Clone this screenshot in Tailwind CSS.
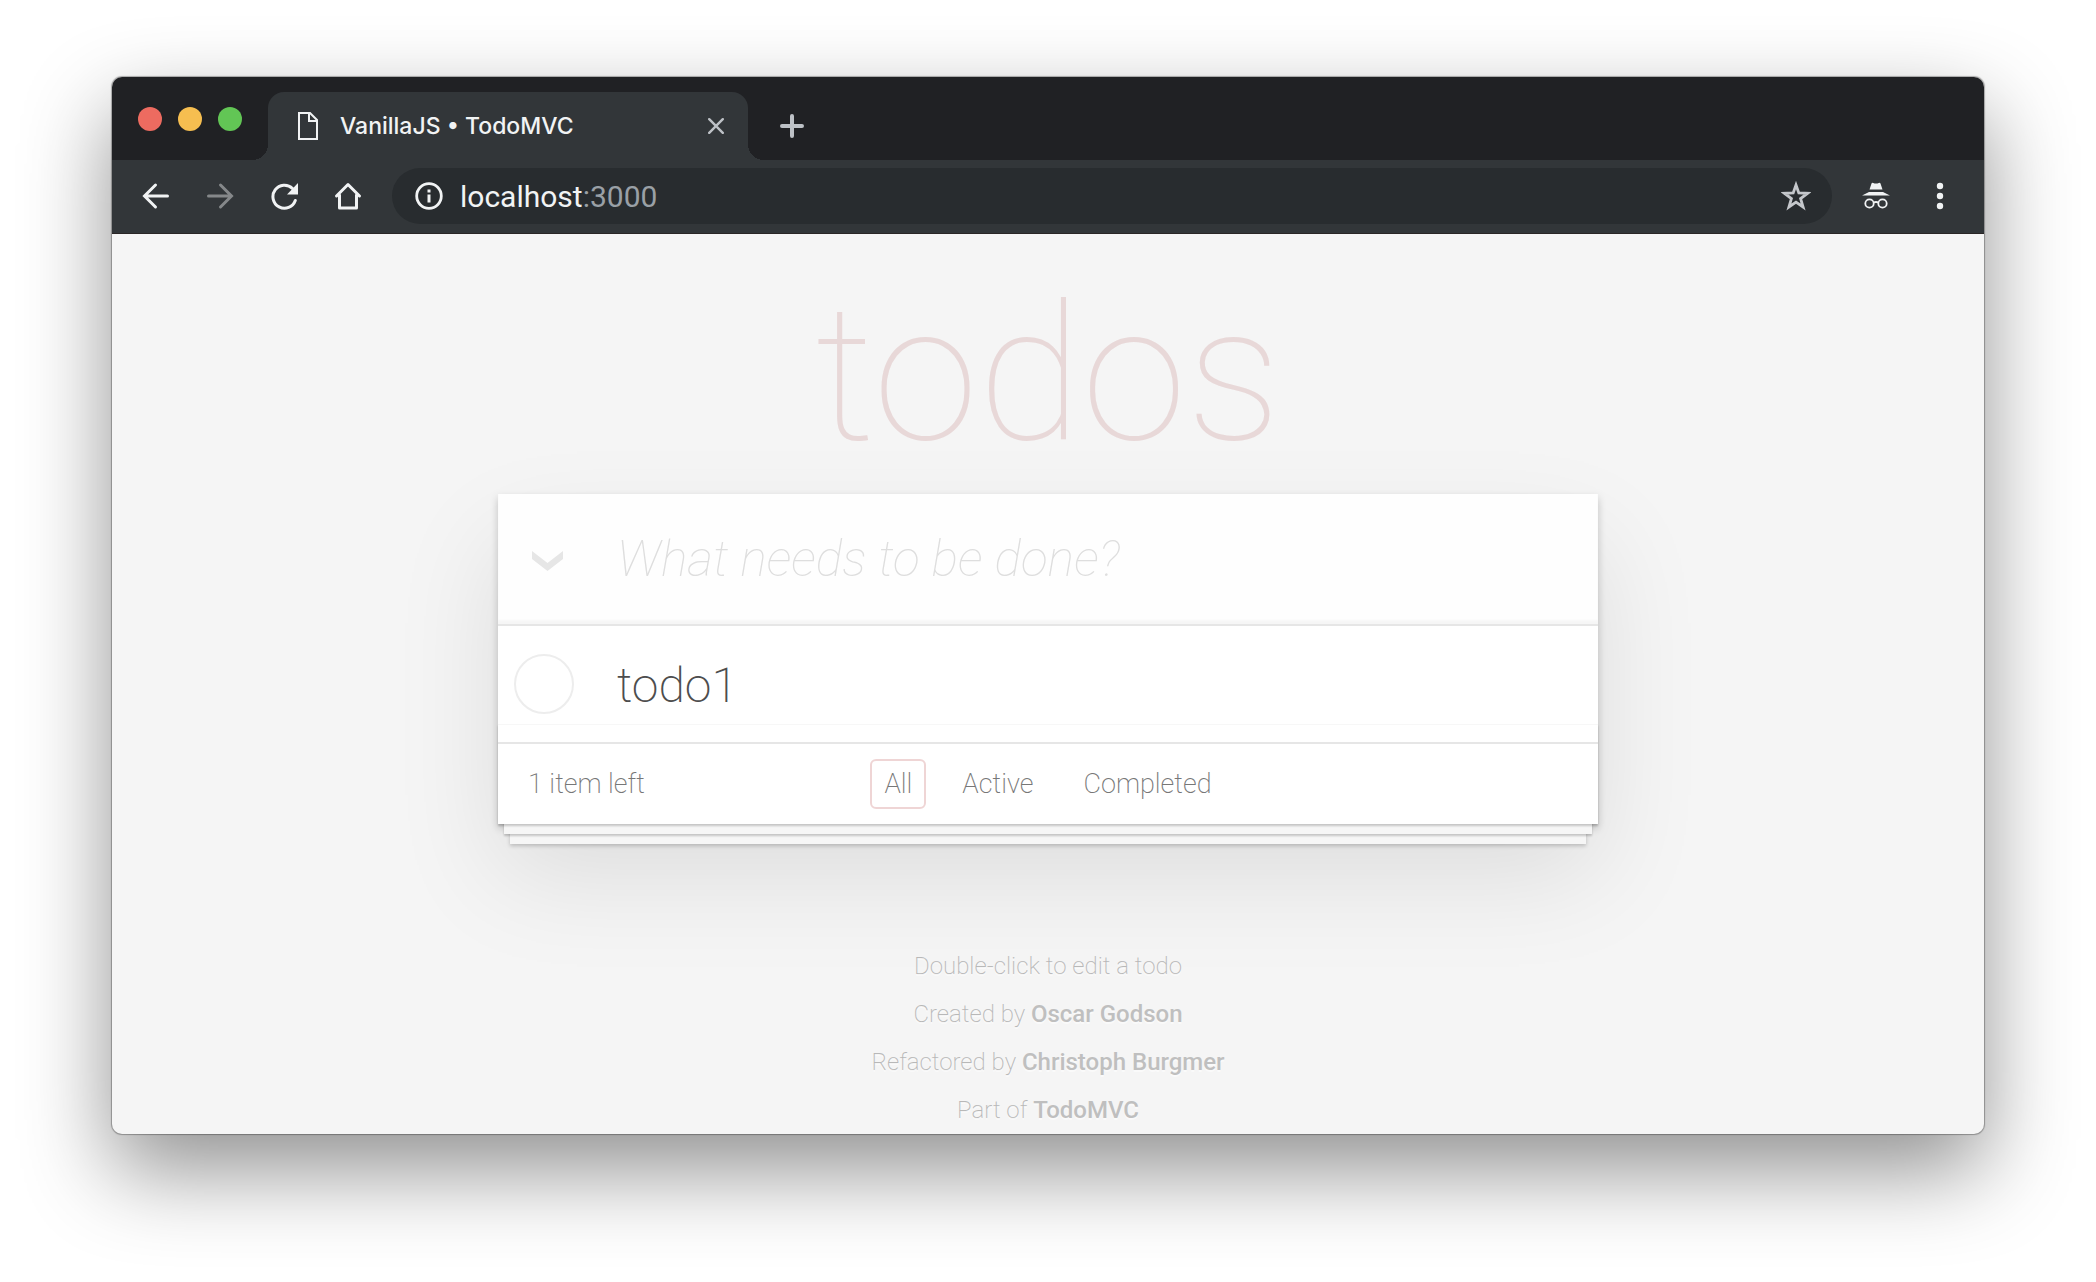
<!DOCTYPE html>
<html lang="en">
<head>
<meta charset="utf-8">
<title>VanillaJS • TodoMVC</title>
<script src="https://cdn.jsdelivr.net/npm/@tailwindcss/browser@4"></script>
</head>
<body class="bg-white font-['Roboto',sans-serif]">
<div class="mx-28 mt-[77px] mb-[148px] overflow-clip rounded-[10px] bg-[#f5f5f5] shadow-[0_0_1px_1px_rgba(0,0,0,0.3),0_36px_88px_rgba(0,0,0,0.44)]">

  <!-- Tab strip -->
  <header class="flex h-[83px] items-end bg-[#202124]">
    <div class="flex h-full w-39 items-center gap-4 pl-[26px]">
      <button aria-label="Close window" class="size-6 rounded-full bg-[#ed6b60]"></button>
      <button aria-label="Minimize window" class="size-6 rounded-full bg-[#f6be50]"></button>
      <button aria-label="Zoom window" class="size-6 rounded-full bg-[#62c655]"></button>
    </div>
    <div class="relative flex h-17 w-[480px] items-center rounded-t-2xl bg-[#323639] pr-[22px] pl-[30px]">
      <span class="absolute bottom-0 -left-4 size-4 bg-[radial-gradient(circle_at_0_0,#202124_16px,#323639_16px)]"></span>
      <span class="absolute -right-4 bottom-0 size-4 bg-[radial-gradient(circle_at_100%_0,#202124_16px,#323639_16px)]"></span>
      <svg class="h-7 w-5" viewBox="0 0 20 28" fill="none" stroke="#f1f3f4" stroke-width="2"><path d="M1 1h11l7 7v19H1zM11 1v8h8"/></svg>
      <span class="ml-[22px] flex-1 font-['Inter',sans-serif] text-[23px] font-medium whitespace-nowrap text-[#f1f3f4]">VanillaJS • TodoMVC</span>
      <button aria-label="Close tab" class="p-0.5"><svg class="size-4" viewBox="0 0 16 16" stroke="#bdc1c6" stroke-width="2.4" stroke-linecap="round"><path d="M1.2 1.2l13.6 13.6M14.8 1.2L1.2 14.8"/></svg></button>
    </div>
    <button aria-label="New tab" class="mb-[22px] ml-8"><svg class="size-6" viewBox="0 0 24 24" stroke="#bdc1c6" stroke-width="4" stroke-linecap="round"><path d="M12 2v20M2 12h20"/></svg></button>
  </header>

  <!-- Toolbar -->
  <nav class="flex h-[74px] items-center border-b border-[#2a2626] bg-[#323639] pr-8 pb-px pl-[30px]">
    <button aria-label="Back" class="mr-9"><svg class="size-7" viewBox="0 0 28 28" fill="none" stroke="#f1f3f4" stroke-width="3" stroke-linecap="round"><path d="M25.500 14H3M13.500 3L2.500 14l11 11"/></svg></button>
    <button aria-label="Forward" class="mr-9"><svg class="size-7" viewBox="0 0 28 28" fill="none" stroke="#85888a" stroke-width="3" stroke-linecap="round"><path d="M2.500 14H25M14.500 3l11 11-11 11"/></svg></button>
    <button aria-label="Reload" class="mr-9"><svg class="size-7" viewBox="0 0 28 28"><path d="M25.300 18.500A11.500 11.500 0 1 1 22.500 6.500" fill="none" stroke="#f1f3f4" stroke-width="3" stroke-linecap="round"/><path d="M28 1v11.500H17z" fill="#f1f3f4"/></svg></button>
    <button aria-label="Home" class="mr-[30px]"><svg class="size-7" viewBox="0 0 28 28" fill="none" stroke="#f1f3f4" stroke-width="3" stroke-linecap="round" stroke-linejoin="round"><path d="M2.500 14L14 2.500 25.500 14M5.500 13v13h17V13"/></svg></button>
    <div class="flex h-14 flex-1 items-center rounded-full bg-[#282c2f] pr-[21px] pl-[23px]">
      <svg class="size-7" viewBox="0 0 28 28"><circle cx="14" cy="14" r="12.300" fill="none" stroke="#f1f3f4" stroke-width="2.800"/><path d="M12.500 7.500h3v3h-3zM12.500 12.500h3v8h-3z" fill="#f1f3f4"/></svg>
      <div class="ml-[17px] flex-1 text-[30px] text-[#9aa0a6]"><span class="text-[#f1f3f4]">localhost</span>:3000</div>
      <button aria-label="Bookmark this page"><svg class="size-[30px]" viewBox="0 0 30 30" fill="none" stroke="#c4c7cb" stroke-width="2.800"><path d="M15 4l2.800 8 8.700.3-6.900 5.300 2.500 8.400-7.100-4.900L7.900 26l2.500-8.400L3.500 12.300l8.700-.3z"/></svg></button>
    </div>
    <svg class="ml-[30px] h-7 w-7" viewBox="0 0 28 28" fill="#f1f3f4" role="img" aria-label="Incognito"><path d="M9.500 1.500q.5-1 1.700-.6 2.800 1 5.600 0 1.200-.4 1.700.6L20.500 7.500h-13zM7 10h14l7 3.500H0z"/><g fill="none" stroke="#f1f3f4" stroke-width="1.800"><circle cx="7.500" cy="21.500" r="4.200"/><circle cx="20.500" cy="21.500" r="4.200"/><path d="M11.500 20.500q2.500-1 5 0"/></g></svg>
    <button aria-label="Menu" class="ml-[38px]"><svg class="h-7 w-6" viewBox="0 0 24 28" fill="#f1f3f4"><circle cx="12" cy="4" r="3.200"/><circle cx="12" cy="14" r="3.200"/><circle cx="12" cy="24" r="3.200"/></svg></button>
  </nav>

  <!-- Page -->
  <main class="px-8">
    <h1 class="h-65 pt-7 text-center text-[190px] leading-[225px] font-thin text-[#e8d8d8]">todos</h1>
    <section class="mx-auto max-w-[1100px] bg-white shadow-[0_4px_8px_rgba(0,0,0,0.2),0_50px_100px_rgba(0,0,0,0.1)]">
      <div class="flex h-[130px] items-center bg-[#fefefe] pl-[34px] shadow-[inset_0_-4px_2px_rgba(0,0,0,0.03)]">
        <button aria-label="Mark all as complete" class="mt-1"><svg class="h-5 w-[31px]" viewBox="0 0 31 20" fill="#e6e6e6"><path d="M0 0l15.500 12L31 0v8L15.500 20 0 8z"/></svg></button>
        <input aria-label="New todo" placeholder="What needs to be done?" class="ml-[54px] h-full min-w-0 flex-1 bg-transparent text-[50px] font-thin italic outline-none placeholder:text-[#dedede]">
      </div>
      <ul class="border-t-2 border-[#e6e6e6]">
        <li class="flex h-29 items-center pl-4">
          <input type="checkbox" id="todo1" class="size-15 appearance-none rounded-full border-2 border-[#ededed]">
          <label for="todo1" class="ml-[43px] pt-1 text-5xl font-extralight text-[#4d4d4d]">todo1</label>
        </li>
      </ul>
      <footer class="relative grid h-[82px] grid-cols-3 items-center border-t-2 border-[#e6e6e6] px-[30px] text-[27px] font-extralight text-[#777]">
        <span class="pointer-events-none absolute inset-x-0 bottom-0 h-25 border-t border-black/3 shadow-[0_2px_2px_rgba(0,0,0,0.2),0_16px_0_-6px_#f6f6f6,0_18px_2px_-6px_rgba(0,0,0,0.2),0_32px_0_-12px_#f6f6f6,0_34px_4px_-12px_rgba(0,0,0,0.2)]"></span>
        <span>1 item left</span>
        <div class="flex justify-center gap-[22px] whitespace-nowrap">
          <a href="#/" class="rounded-md border-2 border-[#af2f2f]/20 px-3 leading-[46px]">All</a>
          <a href="#/active" class="rounded-md border-2 border-transparent px-3 leading-[46px]">Active</a>
          <a href="#/completed" class="rounded-md border-2 border-transparent px-3 leading-[46px]">Completed</a>
        </div>
      </footer>
    </section>
    <footer class="mt-[118px] text-center text-2xl leading-12 font-extralight text-[#b8b8b8] text-shadow-[0_2px_0_rgba(255,255,255,0.5)]">
      <p>Double-click to edit a todo</p>
      <p>Created by <a href="#oscar" class="font-medium text-[#bfbfbf]">Oscar Godson</a></p>
      <p>Refactored by <a href="#christoph" class="font-medium text-[#bfbfbf]">Christoph Burgmer</a></p>
      <p>Part of <a href="#todomvc" class="font-medium text-[#bfbfbf]">TodoMVC</a></p>
    </footer>
  </main>
</div>
</body>
</html>
